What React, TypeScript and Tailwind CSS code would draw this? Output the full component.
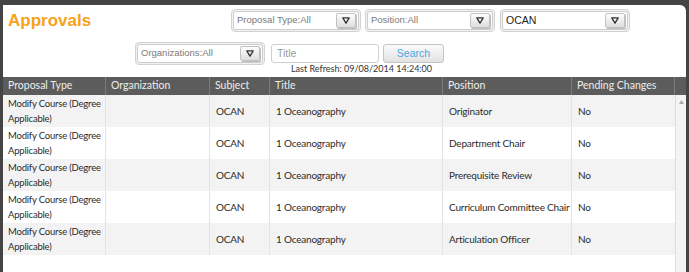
import React from 'react';

const rows = [
  { position: 'Originator' },
  { position: 'Department Chair' },
  { position: 'Prerequisite Review' },
  { position: 'Curriculum Committee Chair' },
  { position: 'Articulation Officer' },
];

const cols = 'grid grid-cols-[103px_104px_60px_173px_129px_103px]';

function Arrow() {
  return (
    <svg width="8" height="7" viewBox="0 0 8 7">
      <path d="M0.8 0.9 H7.2 L4 6.2 Z" fill="none" stroke="#333" strokeWidth="1.3" strokeLinejoin="round" />
    </svg>
  );
}

function Dropdown({ label, dark }: { label: string; dark?: boolean }) {
  return (
    <div className="w-[130px] h-[23px] rounded-[4px] border border-[#d2d2d2] bg-[#f1f1f1] p-[1px]">
      <div className="h-full rounded-[3px] border border-[#cdcdcd] bg-white flex items-center pl-[3px] pr-[2px]">
        <span
          className={`flex-1 font-['Liberation_Sans',sans-serif] ${
            dark ? 'text-[#222] text-[10.5px]' : 'text-[#7a7a7a] text-[9.5px]'
          }`}
        >
          {label}
        </span>
        <div className="w-[20px] h-[15px] rounded-[2px] border border-[#c2c2c2] bg-gradient-to-b from-[#fdfdfd] to-[#dedede] flex items-center justify-center shadow-[1px_1px_0_#bdbdbd]">
          <Arrow />
        </div>
      </div>
    </div>
  );
}

export default function App() {
  return (
    <div className="w-[689px] h-[272px] bg-[#444] pt-[5px] px-[3px] overflow-hidden font-['Lato',sans-serif]">
      <div className="bg-white h-full rounded-tr-[6px] flex flex-col">
        {/* Filters */}
        <div className="h-[72px] flex flex-col">
          <div className="flex h-[37px] pt-[4px]">
            <div className="w-[228px] pl-[5px] pt-[1px] text-[17px] leading-[22px] font-bold text-[#f7a21b] font-['Liberation_Sans',sans-serif]">
              Approvals
            </div>
            <div className="flex gap-[4px]">
              <Dropdown label="Proposal Type:All" />
              <Dropdown label="Position:All" />
              <div className="ml-[1px]">
                <Dropdown label="OCAN" dark />
              </div>
            </div>
          </div>
          <div className="flex pl-[132px] gap-[6px]">
            <Dropdown label="Organizations:All" />
            <div className="flex flex-col pt-[2px]">
              <div className="flex gap-[4px]">
                <div className="w-[108px] h-[19px] rounded-[3px] border border-[#cfcfcf] bg-white flex items-center pl-[5px] text-[10.5px] text-[#9a9a9a] font-['Liberation_Sans',sans-serif]">
                  Title
                </div>
                <div className="w-[61px] h-[19px] rounded-[3px] border border-[#c4c4c4] bg-gradient-to-b from-[#fbfbfb] to-[#e2e2e2] flex items-center justify-center text-[10.5px] text-[#4aa8e2] font-['Liberation_Sans',sans-serif]">
                  Search
                </div>
              </div>
              <div className="pl-[20px] pt-[1px] text-[9px] leading-[10px] text-[#333] whitespace-nowrap">
                Last Refresh: 09/08/2014 14:24:00
              </div>
            </div>
          </div>
        </div>

        {/* Table header */}
        <div className="flex h-[18px] bg-[#5c5c5c] text-[#eeeeee] text-[10.5px]">
          <div className={cols}>
            {['Proposal Type', 'Organization', 'Subject', 'Title', 'Position', 'Pending Changes'].map((h) => (
              <div key={h} className="flex items-center pl-[5px] border-r border-[#7c7c7c] whitespace-nowrap">
                {h}
              </div>
            ))}
          </div>
          <div className="w-[11px]" />
        </div>

        {/* Table body */}
        <div className="flex flex-1 text-[10px] tracking-[-0.2px] text-[#2b2b2b]">
          <div className="w-[672px]">
            {rows.map((r, i) => (
              <div key={r.position} className={`${cols} h-[32px] ${i % 2 === 0 ? 'bg-[#f3f3f3]' : 'bg-white'}`}>
                <div className="flex flex-col justify-center pl-[5px] text-[9.5px] leading-[15px] border-r border-[#e4e4e4] whitespace-nowrap overflow-hidden">
                  <span>Modify Course (Degree</span>
                  <span>Applicable)</span>
                </div>
                <div className="border-r border-[#e4e4e4]" />
                <div className="flex items-center pl-[6px] border-r border-[#e4e4e4]">OCAN</div>
                <div className="flex items-center pl-[6px] border-r border-[#e4e4e4]">1 Oceanography</div>
                <div className="flex items-center pl-[6px] border-r border-[#e4e4e4] whitespace-nowrap">{r.position}</div>
                <div className="flex items-center pl-[6px]">No</div>
              </div>
            ))}
          </div>
          <div className="w-[11px] bg-[#f4f4f4] border-l border-[#dddddd] flex justify-center pt-[5px]">
            <svg width="5" height="4" viewBox="0 0 5 4">
              <path d="M2.5 0 L5 4 H0 Z" fill="#a8a8a8" />
            </svg>
          </div>
        </div>
      </div>
    </div>
  );
}
